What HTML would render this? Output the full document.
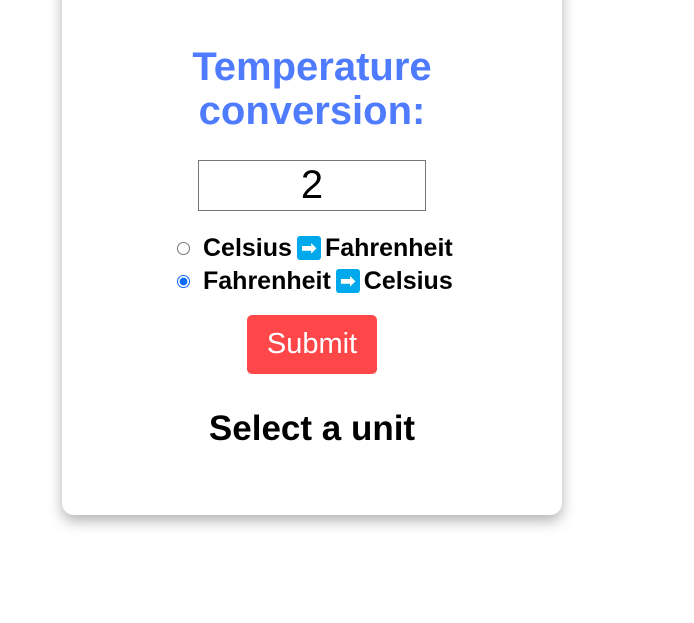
<!DOCTYPE html>
<html><head><style>
body{margin:0;width:694px;height:623px;background:#fff;font-family:"Liberation Sans",sans-serif;overflow:hidden;position:relative}
.card{position:absolute;left:62px;top:-20px;width:500px;height:535px;background:#fff;border-radius:12px;box-shadow:0 6px 14px rgba(0,0,0,0.3)}
h1{position:absolute;left:0;width:500px;top:65px;margin:0;text-align:center;color:#4f7bff;font-size:40px;line-height:44px;font-weight:bold}
.inp{position:absolute;left:136px;top:180px;width:226px;height:49px;border:1px solid #767676;text-align:center;font-size:40px;line-height:49px}
.row{position:absolute;left:115px;font-size:25px;font-weight:bold;line-height:30px;display:flex;align-items:center}
.r{width:13px;height:13px;border:1px solid #767676;border-radius:50%;margin-right:13px;box-sizing:border-box}
.r.on{border:1.5px solid #0a6cff;background:radial-gradient(circle,#0a6cff 3.5px,#fff 4.2px)}
.em{display:inline-block;width:24px;height:24px;background:#00a8ec;border-radius:3px;color:#fff;font-size:18px;line-height:24px;text-align:center;margin:0 4px 0 5px}
.btn{position:absolute;left:185px;top:335px;width:130px;height:59px;background:#ff474a;border-radius:5px;color:#fff;font-size:29px;line-height:59px;text-align:center}
.res{position:absolute;left:0;width:500px;top:429px;text-align:center;font-size:35px;font-weight:bold}
</style></head><body>
<div class="card">
<h1>Temperature<br>conversion:</h1>
<div class="inp">2</div>
<div class="row" style="top:253px"><span class="r"></span>Celsius<span class="em">➡</span>Fahrenheit</div>
<div class="row" style="top:286px"><span class="r on"></span>Fahrenheit<span class="em">➡</span>Celsius</div>
<div class="btn">Submit</div>
<div class="res">Select a unit</div>
</div>
</body></html>
